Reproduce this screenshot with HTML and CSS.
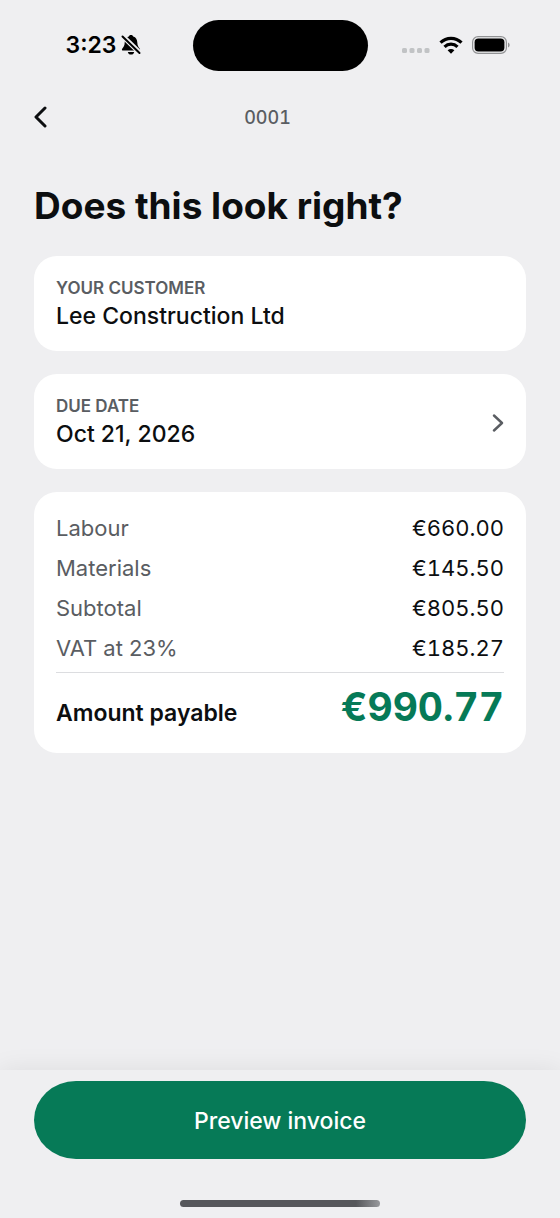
FILE: index.html
```html
<!DOCTYPE html>
<html lang="en">
<head>
    <meta charset="UTF-8">
    <meta name="viewport" content="width=device-width, initial-scale=1.0">
    <title>Invoice 0001</title>
    <link rel="stylesheet" href="styles.css">
</head>
<body>
    <div class="status-bar">
        <div class="status-left">
            <span class="time">3:23</span>
            <svg width="20" height="22" viewBox="0 0 20 22" aria-hidden="true">
                <path d="M10 1C8.700 1 8 1.700 7.800 2.500C5 3.300 3.800 5.500 3.700 8.500C3.600 12 2.500 13.200 1.200 14.700C0.500 15.600 1 16.600 2.100 16.600H17.900C19 16.600 19.500 15.600 18.800 14.700C17.500 13.200 16.400 12 16.300 8.500C16.200 5.500 15 3.300 12.200 2.500C12 1.700 11.300 1 10 1Z"/>
                <path d="M6.800 18H13.200C12.900 19.700 11.700 20.600 10 20.600S7.100 19.700 6.800 18Z"/>
                <path d="M1 1.500L19.500 19.500" stroke="#efeff1" stroke-width="5"/>
                <path d="M1.500 2.500L18.500 19" stroke="#000" stroke-width="2" stroke-linecap="round"/>
            </svg>
        </div>
        <div class="island"></div>
        <div class="status-right">
            <svg width="28" height="6" viewBox="0 0 28 6" fill="#c1c3c5" aria-hidden="true">
                <rect x="0" y="0" width="5" height="5" rx="1.500"/>
                <rect x="7.500" y="0" width="5" height="5" rx="1.500"/>
                <rect x="15" y="0" width="5" height="5" rx="1.500"/>
                <rect x="22.500" y="0" width="5" height="5" rx="1.500"/>
            </svg>
            <svg width="24" height="18" viewBox="0 0 24 18" fill="none" stroke="#000" stroke-width="3.200" aria-hidden="true">
                <path d="M1.500 6.600C7.400 0.900 16.600 0.900 22.500 6.600"/>
                <path d="M5.500 10.800C9.200 7.300 14.800 7.300 18.500 10.800"/>
                <path d="M12 17.800L8.600 14.300C10.500 12.600 13.500 12.600 15.400 14.300Z" fill="#000" stroke="none"/>
            </svg>
            <svg width="38" height="18" viewBox="0 0 38 18" aria-hidden="true">
                <rect x="0.600" y="0.600" width="33.800" height="16.800" rx="5.500" fill="none" stroke="#919294" stroke-width="1.200"/>
                <rect x="2.600" y="2.600" width="29.800" height="12.800" rx="3.700"/>
                <path d="M36 6.500C38.200 7.300 38.200 10.700 36 11.500Z" fill="#919294"/>
            </svg>
        </div>
    </div>

    <header class="nav">
        <button type="button" class="back" aria-label="Back">
            <svg width="13" height="22" viewBox="0 0 13 22" fill="none" stroke="#0c0e10" stroke-width="3" stroke-linecap="round" stroke-linejoin="round" aria-hidden="true">
                <path d="M11 2L2 11L11 20"/>
            </svg>
        </button>
        <span class="nav-title">0001</span>
    </header>

    <main class="content">
        <h1>Does this look right?</h1>

        <section class="card">
            <div class="card-label">YOUR CUSTOMER</div>
            <div class="card-value">Lee Construction Ltd</div>
        </section>

        <button type="button" class="card card-link">
            <span>
                <span class="card-label">DUE DATE</span>
                <span class="card-value">Oct 21, 2026</span>
            </span>
            <svg width="12" height="18" viewBox="0 0 12 18" fill="none" stroke="#5a5d62" stroke-width="2.400" stroke-linecap="round" stroke-linejoin="round" aria-hidden="true">
                <path d="M2 1.500L10 9L2 16.500"/>
            </svg>
        </button>

        <section class="card totals">
            <table>
                <tbody>
                    <tr><th scope="row">Labour</th><td>€660.00</td></tr>
                    <tr><th scope="row">Materials</th><td>€145.50</td></tr>
                    <tr><th scope="row">Subtotal</th><td>€805.50</td></tr>
                    <tr><th scope="row">VAT at 23%</th><td>€185.27</td></tr>
                </tbody>
                <tfoot>
                    <tr><th scope="row">Amount payable</th><td>€990.77</td></tr>
                </tfoot>
            </table>
        </section>
    </main>

    <footer class="footer">
        <button type="button" class="preview">Preview invoice</button>
        <div class="home-bar"></div>
    </footer>
</body>
</html>
```
FILE: styles.css
```css
* {
    box-sizing: border-box;
}

body {
    margin: 0;
    min-height: 100vh;
    display: flex;
    flex-direction: column;
    font-family: Inter, "Liberation Sans", sans-serif;
    background: #efeff1;
    color: #0c0e10;
}

button {
    font: inherit;
    color: inherit;
    border: none;
    padding: 0;
    cursor: pointer;
}

svg {
    display: block;
    flex: none;
}

.status-bar {
    display: grid;
    grid-template-columns: 1fr 175px 1fr;
    align-items: center;
    height: 90px;
    color: #000;
}

.status-left,
.status-right {
    display: flex;
    align-items: center;
}

.status-left {
    justify-content: flex-end;
    gap: 4px;
    padding-right: 52px;
}

.status-right {
    gap: 9px;
    padding-left: 34px;
}

.status-right svg:first-child {
    margin-top: 12px;
}

.time {
    font-size: 23px;
    font-weight: 600;
}

.island {
    height: 51px;
    border-radius: 26px;
    background: #000;
}

.nav {
    display: flex;
    align-items: center;
    height: 54px;
    padding: 0 72px 0 34px;
}

.back {
    background: none;
}

.nav-title {
    flex: 1;
    text-align: center;
    font-size: 18px;
    font-weight: 500;
    font-variant-numeric: tabular-nums;
    color: #5a5d62;
}

.content {
    flex: 1;
    display: flex;
    flex-direction: column;
    gap: 23px;
    padding: 34px 34px 24px;
}

h1 {
    margin: 0;
    font-size: 37px;
    line-height: 55px;
    font-weight: 700;
}

.card {
    display: block;
    padding: 20px 22px 18px;
    background: #fff;
    border-radius: 23px;
}

.card-link {
    display: flex;
    align-items: center;
    justify-content: space-between;
    text-align: left;
}

.card-label,
.card-value {
    display: block;
}

.card-label {
    font-size: 17px;
    line-height: 24px;
    font-weight: 600;
    color: #5a5d62;
}

.card-value {
    font-size: 23px;
    line-height: 33px;
    font-weight: 500;
}

.totals {
    padding: 16px 22px;
}

table {
    width: 100%;
    border-collapse: collapse;
}

th,
td {
    padding: 0;
    font-size: 22px;
    line-height: 40px;
    font-weight: 400;
}

th {
    text-align: left;
    color: #5a5d62;
}

td {
    text-align: right;
    font-variant-numeric: tabular-nums;
}

tbody tr:last-child > * {
    padding-bottom: 4px;
    border-bottom: 1px solid #dcdde0;
}

tfoot th {
    padding-top: 16px;
    font-size: 23px;
    font-weight: 600;
    color: #0c0e10;
}

tfoot td {
    padding-top: 4px;
    font-size: 39px;
    line-height: 60px;
    font-weight: 700;
    color: #067a57;
}

.footer {
    padding: 11px 34px;
    background: #efeff1;
    box-shadow: 0 0 24px rgba(0, 0, 0, 0.08);
}

.preview {
    display: block;
    width: 100%;
    height: 78px;
    padding-top: 2px;
    font-size: 23px;
    font-weight: 500;
    color: #fff;
    background: #067a57;
    border-radius: 42px / 39px;
}

.home-bar {
    width: 200px;
    height: 7px;
    margin: 41px auto 0;
    border-radius: 4px;
    background: linear-gradient(90deg, #56575b 88%, #97989c);
}
```
